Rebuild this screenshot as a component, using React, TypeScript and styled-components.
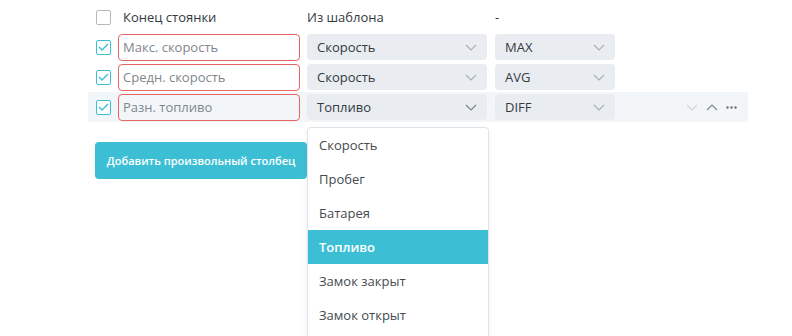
import styled, { createGlobalStyle } from "styled-components";

const GlobalStyle = createGlobalStyle`
  body {
    margin: 0;
    background: #ffffff;
    font-family: "Open Sans", "Noto Sans", sans-serif;
    color: #333a40;
  }
`;

const teal = "#3cbfd4";

const Page = styled.div`
  width: 792px;
  height: 336px;
  overflow: hidden;
  padding: 2px 0 0 88px;
  box-sizing: border-box;
`;

const Row = styled.div<{ $active?: boolean }>`
  position: relative;
  display: flex;
  align-items: center;
  height: 30px;
  width: 660px;
  padding: 0 11px 0 8px;
  box-sizing: border-box;
  background: ${(p) => (p.$active ? "#f3f6f9" : "transparent")};
`;

const Check = styled.span<{ $on?: boolean }>`
  display: inline-flex;
  align-items: center;
  justify-content: center;
  width: 15px;
  height: 15px;
  box-sizing: border-box;
  border: 1.5px solid ${(p) => (p.$on ? teal : "#b4b9be")};
  border-radius: 2px;
  background: #fff;
  margin-right: 7px;
  flex: none;
`;

const HeadCell = styled.div<{ $w: number; $pad?: number }>`
  width: ${(p) => p.$w}px;
  padding-left: ${(p) => p.$pad ?? 0}px;
  box-sizing: border-box;
  font-size: 13px;
  color: #333a40;
  flex: none;
`;

const NameInput = styled.div`
  width: 182px;
  height: 27px;
  box-sizing: border-box;
  border: 1px solid #e76565;
  border-radius: 4px;
  padding: 0 4px;
  display: flex;
  align-items: center;
  font-size: 13px;
  color: #80878d;
  margin-right: 7px;
  flex: none;
`;

const Select = styled.div<{ $w: number }>`
  width: ${(p) => p.$w}px;
  height: 26px;
  box-sizing: border-box;
  background: #e9edf1;
  border-radius: 4px;
  padding: 0 10px 0 10px;
  display: flex;
  align-items: center;
  justify-content: space-between;
  font-size: 13px;
  color: #333a40;
  margin-right: 8px;
  flex: none;
  position: relative;
`;

const Actions = styled.div`
  margin-left: auto;
  display: flex;
  align-items: center;
  gap: 8px;
`;

const AddButton = styled.button`
  margin: 20px 0 0 7px;
  width: 212px;
  height: 37px;
  border: none;
  border-radius: 4px;
  background: ${teal};
  color: #fff;
  font-family: "Open Sans", "Noto Sans", sans-serif;
  font-weight: 600;
  font-size: 11px;
  white-space: nowrap;
  padding: 0;
  cursor: pointer;
`;

const Menu = styled.ul`
  position: absolute;
  top: 33px;
  left: 0;
  width: 180px;
  margin: 0;
  padding: 0 0 12px;
  list-style: none;
  background: #fff;
  border: 1px solid #dfe3e7;
  border-radius: 4px;
  box-shadow: 0 2px 6px rgba(0, 0, 0, 0.06);
  z-index: 5;
`;

const MenuItem = styled.li<{ $sel?: boolean }>`
  height: 34px;
  display: flex;
  align-items: center;
  padding-left: 11px;
  font-size: 13px;
  font-weight: ${(p) => (p.$sel ? 600 : 400)};
  background: ${(p) => (p.$sel ? teal : "transparent")};
  color: ${(p) => (p.$sel ? "#fff" : "#454b51")};
`;

const Chevron = ({ up, color = "#a9b0b6" }: { up?: boolean; color?: string }) => (
  <svg width="12" height="7" viewBox="0 0 12 7" fill="none">
    <path
      d={up ? "M1 6 L6 1 L11 6" : "M1 1 L6 6 L11 1"}
      stroke={color}
      strokeWidth="1.2"
    />
  </svg>
);

const Tick = () => (
  <svg width="11" height="8" viewBox="0 0 11 8" fill="none">
    <path d="M1 4 L4 7 L10 1" stroke={teal} strokeWidth="1.4" />
  </svg>
);

const Dots = () => (
  <svg width="11" height="3" viewBox="0 0 11 3">
    <circle cx="1.5" cy="1.5" r="1.2" fill="#6d747a" />
    <circle cx="5.5" cy="1.5" r="1.2" fill="#6d747a" />
    <circle cx="9.5" cy="1.5" r="1.2" fill="#6d747a" />
  </svg>
);

const rows = [
  { name: "Макс. скорость", src: "Скорость", fn: "MAX" },
  { name: "Средн. скорость", src: "Скорость", fn: "AVG" },
  { name: "Разн. топливо", src: "Топливо", fn: "DIFF" },
];

const options = ["Скорость", "Пробег", "Батарея", "Топливо", "Замок закрыт", "Замок открыт"];

export default function App() {
  return (
    <>
      <GlobalStyle />
      <Page>
        <Row>
          <Check />
          <HeadCell $w={189} $pad={5}>Конец стоянки</HeadCell>
          <HeadCell $w={188}>Из шаблона</HeadCell>
          <HeadCell $w={120}>-</HeadCell>
        </Row>

        {rows.map((r, i) => {
          const open = i === rows.length - 1;
          return (
            <Row key={i} $active={open}>
              <Check $on>
                <Tick />
              </Check>
              <NameInput>{r.name}</NameInput>
              <Select $w={180}>
                {r.src}
                <Chevron color={open ? "#7d858c" : "#a9b0b6"} />
                {open && (
                  <Menu>
                    {options.map((o) => (
                      <MenuItem key={o} $sel={o === r.src}>
                        {o}
                      </MenuItem>
                    ))}
                  </Menu>
                )}
              </Select>
              <Select $w={120}>
                {r.fn}
                <Chevron />
              </Select>
              {open && (
                <Actions>
                  <Chevron color="#d0d5da" />
                  <Chevron up color="#7d858c" />
                  <Dots />
                </Actions>
              )}
            </Row>
          );
        })}

        <AddButton>Добавить произвольный столбец</AddButton>
      </Page>
    </>
  );
}
